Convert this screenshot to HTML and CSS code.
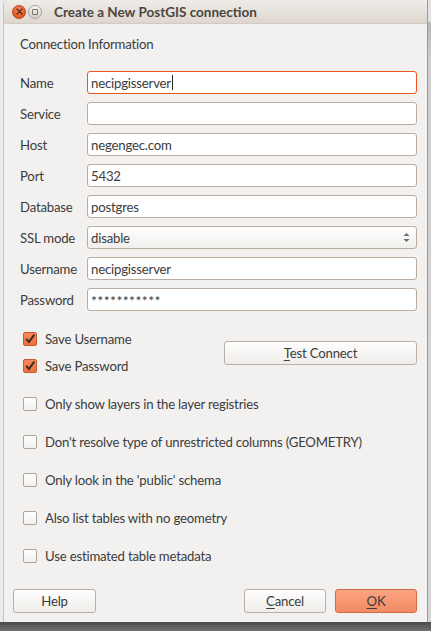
FILE: index.html
```html
<!DOCTYPE html>
<html>
<head>
<meta charset="utf-8">
<link rel="stylesheet" href="styles.css">
</head>
<body>
<div class="screen">
  <div class="row-main">
    <div class="win">
      <div class="titlebar">
        <span class="tb-btn tb-close"><svg width="7" height="7" viewBox="0 0 7 7"><path d="M1 1L6 6M6 1L1 6" stroke="#5a2a14" stroke-width="1.4" stroke-linecap="round"/></svg></span>
        <span class="tb-btn tb-max"><span class="tb-sq"></span></span>
        <span class="tb-title">Create a New PostGIS connection</span>
      </div>
      <div class="body">
        <div class="group">
          <div class="group-title">Connection Information</div>
          <div class="form">
            <label class="lbl">Name</label>
            <div class="input focus">necipgisserver<span class="caret"></span></div>
            <label class="lbl">Service</label>
            <div class="input"></div>
            <label class="lbl">Host</label>
            <div class="input">negengec.com</div>
            <label class="lbl">Port</label>
            <div class="input">5432</div>
            <label class="lbl">Database</label>
            <div class="input">postgres</div>
            <label class="lbl">SSL mode</label>
            <div class="input combo"><span>disable</span>
              <svg class="arrows" width="7" height="11" viewBox="0 0 7 11"><path d="M3.5 1L6.5 4H0.5Z" fill="#6b6b6b"/><path d="M3.5 10L6.5 7H0.5Z" fill="#6b6b6b"/></svg>
            </div>
            <label class="lbl">Username</label>
            <div class="input">necipgisserver</div>
            <label class="lbl">Password</label>
            <div class="input pw">***********</div>
          </div>
          <div class="save-grid">
            <div class="check-row r1"><span class="cb checked"><svg width="14" height="14" viewBox="0 0 14 14"><path d="M3.2 6.8L6 10L11.3 2.6" fill="none" stroke="#3a2a22" stroke-width="2"/></svg></span><span>Save Username</span></div>
            <div class="check-row r2"><span class="cb checked"><svg width="14" height="14" viewBox="0 0 14 14"><path d="M3.2 6.8L6 10L11.3 2.6" fill="none" stroke="#3a2a22" stroke-width="2"/></svg></span><span>Save Password</span></div>
            <div class="btn test"><span><u>T</u>est Connect</span></div>
          </div>
          <div class="options">
            <div class="check-row"><span class="cb"></span><span>Only show layers in the layer registries</span></div>
            <div class="check-row"><span class="cb"></span><span>Don't resolve type of unrestricted columns (GEOMETRY)</span></div>
            <div class="check-row"><span class="cb"></span><span>Only look in the 'public' schema</span></div>
            <div class="check-row"><span class="cb"></span><span>Also list tables with no geometry</span></div>
            <div class="check-row"><span class="cb"></span><span>Use estimated table metadata</span></div>
          </div>
        </div>
        <div class="footer">
          <div class="btn help">Help</div>
          <div class="spacer"></div>
          <div class="btn cancel"><span><u>C</u>ancel</span></div>
          <div class="btn ok"><span><u>O</u>K</span></div>
        </div>
      </div>
    </div>
    <div class="right-strip"></div>
  </div>
  <div class="shadow"></div>
</div>
</body>
</html>
```
FILE: styles.css
```css
* { box-sizing: border-box; }
html, body { margin: 0; padding: 0; }
body {
  width: 431px;
  height: 631px;
  overflow: hidden;
  font-family: Lato, "Open Sans", sans-serif;
  font-size: 13.2px;
  letter-spacing: -0.2px;
  color: #3c3c3c;
  background: #e6e6e6;
}
.screen {
  width: 431px;
  height: 631px;
  display: flex;
  flex-direction: column;
  background: #ececec;
}
.row-main {
  display: flex;
  height: 622px;
  padding-left: 3px;
}
.win {
  width: 424px;
  height: 622px;
  display: flex;
  flex-direction: column;
  background: #f2f1f0;
  border-left: 1px solid #c9c5c0;
  border-radius: 5px 5px 0 0;
  overflow: hidden;
}
.right-strip {
  width: 4px;
  border-left: 1px solid #9c9a98;
  background: linear-gradient(#e2e2e2 0, #e2e2e2 22px, #b8b8b8 22px, #cfcfcf 60px, #d6d6d6 100%);
}
.titlebar {
  height: 24px;
  flex: none;
  display: flex;
  align-items: center;
  background: linear-gradient(#efece8, #ddd6ce);
  border-bottom: 1px solid #d3cbc2;
  padding-left: 8px;
}
.tb-btn {
  width: 14px;
  height: 14px;
  border-radius: 50%;
  display: flex;
  align-items: center;
  justify-content: center;
  margin-right: 2px;
}
.tb-close {
  background: radial-gradient(circle at 50% 35%, #f8906a, #e2561f 70%);
  border: 1px solid #b3461c;
}
.tb-max {
  background: linear-gradient(#f7f5f2, #d2ccc5);
  border: 1px solid #aaa39c;
}
.tb-sq {
  width: 6px;
  height: 6px;
  border: 1px solid #7a746e;
  border-radius: 1px;
}
.tb-title {
  margin-left: 10px;
  font-weight: bold;
  font-size: 13.5px;
  letter-spacing: 0;
  color: #4a4641;
}
.body {
  flex: 1;
  display: flex;
  flex-direction: column;
  padding: 11px 10px 9px 9px;
}
.group {
  flex: 1;
  padding-left: 7px;
  display: flex;
  flex-direction: column;
}
.group-title {
  height: 18px;
  line-height: 18px;
}
.form {
  margin-top: 18px;
  display: grid;
  grid-template-columns: 67px 1fr;
  grid-auto-rows: 23px;
  row-gap: 8px;
}
.lbl {
  display: flex;
  align-items: center;
}
.input {
  background: #fff;
  border: 1px solid #b9ada2;
  border-radius: 3px;
  display: flex;
  align-items: center;
  padding-left: 3px;
  white-space: nowrap;
}
.input.focus {
  border-color: #e8571f;
}
.caret {
  display: inline-block;
  width: 1px;
  height: 15px;
  background: #222;
  margin-left: 1px;
}
.input.combo {
  background: linear-gradient(#ffffff, #f1efec);
  justify-content: space-between;
  padding-right: 6px;
}
.input.pw {
  font-size: 14px;
  letter-spacing: 0.4px;
  padding-top: 2px;
}
.save-grid {
  margin-top: 18px;
  display: grid;
  grid-template-columns: 1fr 193px;
  grid-template-rows: 20px 20px;
  row-gap: 7px;
}
.save-grid .r1 { grid-row: 1; grid-column: 1; }
.save-grid .r2 { grid-row: 2; grid-column: 1; }
.save-grid .test {
  grid-column: 2;
  grid-row: 1 / 3;
  align-self: center;
}
.check-row {
  height: 20px;
  display: flex;
  align-items: center;
  padding-left: 3px;
  white-space: nowrap;
}
.cb {
  width: 14px;
  height: 14px;
  flex: none;
  border: 1px solid #ada49b;
  border-radius: 2px;
  background: linear-gradient(#ffffff, #f3f1ef);
  margin-right: 8px;
  position: relative;
}
.cb svg {
  position: absolute;
  left: -1px;
  top: -1px;
}
.cb.checked {
  background: linear-gradient(#f6895c, #ee6f3c);
  border-color: #c45a2e;
}
.options {
  margin-top: 18px;
  display: flex;
  flex-direction: column;
  gap: 18px;
}
.btn {
  height: 24px;
  border: 1px solid #bab0a6;
  border-radius: 3px;
  background: linear-gradient(#fefefe, #efedea);
  display: flex;
  align-items: center;
  justify-content: center;
  white-space: nowrap;
}
.btn u {
  text-decoration: underline;
  text-underline-offset: 2px;
}
.footer {
  margin-top: 22px;
  display: flex;
  align-items: center;
  gap: 9px;
}
.spacer { flex: 1; }
.help { width: 83px; }
.cancel { width: 82px; }
.ok {
  width: 82px;
  background: linear-gradient(#fba483, #f18a62);
  border-color: #cf6b45;
}
.shadow {
  height: 9px;
  background: linear-gradient(#4a4a4a, #707070);
}
```
